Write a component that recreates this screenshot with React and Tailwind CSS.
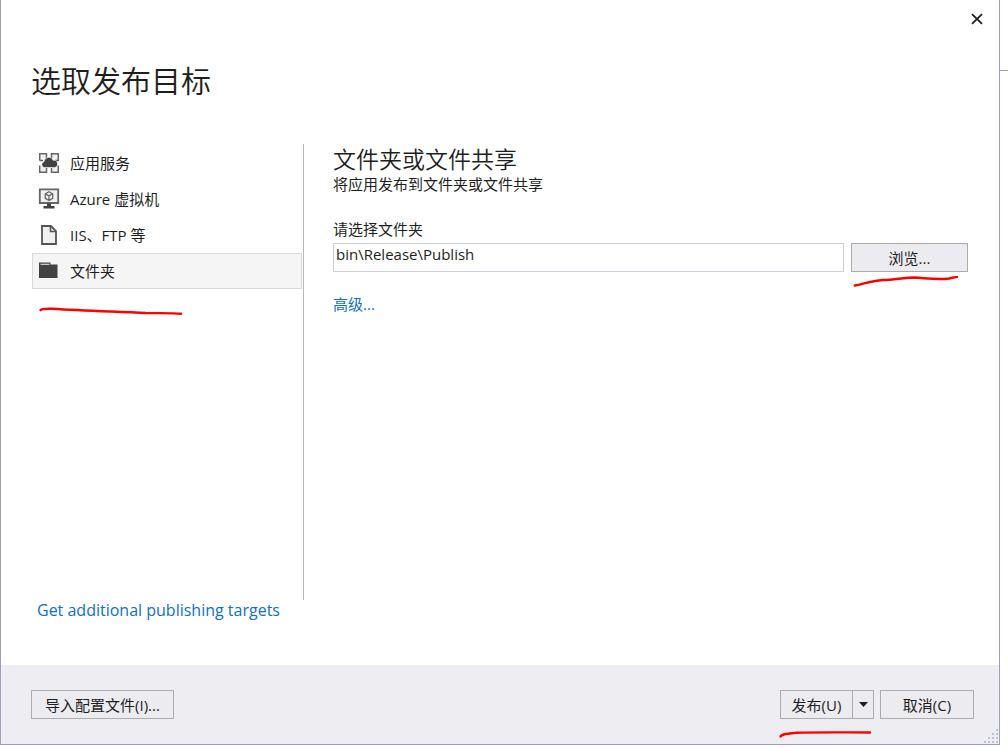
import React, { useState } from 'react';

const AppServiceIcon = () => (
  <svg width="22" height="22" viewBox="0 0 22 22" fill="none" aria-hidden="true">
    <path
      d="M1.7 8.5V1.7H8.5V6M13.5 6V1.7H20.3V8.5H17M1.7 13.5V20.3H8.5V16M13.5 16V20.3H20.3V13.5M1.7 8.5H5"
      fill="#f0eff1"
      stroke="#666"
      strokeWidth="1.5"
    />
    <path
      d="M6.5 15.6a3 3 0 0 1-.5-5.9 4.8 4.8 0 0 1 9.2-1.4 3.7 3.7 0 0 1 1.3 7.3z"
      fill="#424242"
      stroke="#fff"
      strokeWidth="0.6"
    />
  </svg>
);

const VirtualMachineIcon = () => (
  <svg width="22" height="22" viewBox="0 0 22 22" fill="none" aria-hidden="true">
    <path d="M1.800 1.300H20.200V15H1.800z" fill="#f0eff1" stroke="#666" strokeWidth="1.800" />
    <path d="M9 15.500h4v2.500H16.500v2.500H5.500V18h3.500z" fill="#424242" />
    <path
      d="M11 3.800l3.700 2v4.600L11 12.500l-3.700-2.100V5.800zM7.300 5.800L11 7.900l3.700-2.100M11 7.900v4.600"
      stroke="#666"
      strokeWidth="1.300"
    />
  </svg>
);

const DocumentIcon = () => (
  <svg width="22" height="22" viewBox="0 0 22 22" fill="none" aria-hidden="true">
    <path d="M4 2H13L18 7V20H4z" fill="#f0eff1" stroke="#555" strokeWidth="1.800" />
    <path d="M12.500 2V7.500H18" stroke="#555" strokeWidth="1.600" />
  </svg>
);

const FolderIcon = () => (
  <svg width="22" height="22" viewBox="0 0 22 22" fill="none" aria-hidden="true">
    <path d="M1 2.500H12.500V4.500H19.500V18H1z" fill="#424242" />
    <path d="M2.500 3.700H11.500V5H2.500z" fill="#c8c8c8" />
  </svg>
);

const targets = [
  { id: 'app-service', label: '应用服务', icon: AppServiceIcon },
  { id: 'vm', label: 'Azure 虚拟机', icon: VirtualMachineIcon },
  { id: 'iis-ftp', label: 'IIS、FTP 等', icon: DocumentIcon },
  { id: 'folder', label: '文件夹', icon: FolderIcon },
];

// Red pen stroke laid over the dialog
const PenMark = ({ d, className }) => (
  <svg
    width="150"
    height="14"
    viewBox="0 0 150 14"
    fill="none"
    aria-hidden="true"
    className={`pointer-events-none absolute ${className}`}
  >
    <path d={d} stroke="#fe0000" strokeWidth="2.400" strokeLinecap="round" strokeLinejoin="round" />
  </svg>
);

const gripDots = [
  [12, 0],
  [8, 4], [12, 4],
  [4, 8], [8, 8], [12, 8],
  [0, 12], [4, 12], [8, 12], [12, 12],
];

export default function App() {
  const [selected, setSelected] = useState('folder');
  const [folder, setFolder] = useState('bin\\Release\\Publish');

  return (
    <div className="flex min-h-screen bg-white pb-[3px] font-['Open_Sans','Noto_Sans_CJK_SC',sans-serif] text-[15px] leading-5 text-[#1e1e1e]">
      <div className="flex flex-1 flex-col border-x border-b border-[#9b9fb9]">
        <header className="px-[30px]">
          <div className="-mr-5 flex justify-end pt-[7px]">
            <button type="button" aria-label="关闭" className="flex size-6 items-center justify-center">
              <svg width="12" height="12" viewBox="0 0 12 12" aria-hidden="true">
                <path d="M1 1.200L11 10.800M11 1.200L1 10.800" stroke="#1e1e1e" strokeWidth="1.800" />
              </svg>
            </button>
          </div>
          <h1 className="mt-[30px] text-[30px] leading-10 font-[350]">选取发布目标</h1>
        </header>

        <main className="flex flex-1 pt-[43px] pr-[31px] pl-[31px]">
          <aside className="flex w-[272px] shrink-0 flex-col">
            <div className="flex flex-1 flex-col border-r border-[#b4b8c2] pr-px">
              <nav className="relative flex flex-col pt-px">
                {targets.map(({ id, label, icon: Icon }) => (
                  <button
                    key={id}
                    type="button"
                    onClick={() => setSelected(id)}
                    className={`flex h-9 items-center gap-[10px] border px-[5px] text-left ${
                      selected === id ? 'border-[#d9d9d9] bg-[#f5f5f5]' : 'border-transparent'
                    }`}
                  >
                    <Icon />
                    <span>{label}</span>
                  </button>
                ))}
                <PenMark
                  className="top-full left-1 mt-4"
                  d="M4.500 5.200C6 3.500 9 3.500 16 3.800C50 6 80 6.500 110 8C125 8.300 135 8 145 8.800"
                />
              </nav>
            </div>
            <a href="#targets" className="mb-[45px] pl-[5px] text-base leading-5 text-[#0e70c0]">
              Get additional publishing targets
            </a>
          </aside>

          <section className="flex-1 pl-[29px]">
            <h2 className="text-[23px] leading-[30px] font-[350]">文件夹或文件共享</h2>
            <p>将应用发布到文件夹或文件共享</p>
            <label htmlFor="folder" className="mt-[25px] block">
              请选择文件夹
            </label>
            <div className="mt-1 flex gap-[7px]">
              <input
                id="folder"
                type="text"
                value={folder}
                onChange={(e) => setFolder(e.target.value)}
                className="h-[29px] min-w-0 flex-1 border border-[#cccedb] bg-white px-[2px] pb-[7px] outline-none"
              />
              <div className="relative">
                <button type="button" className="h-[29px] w-[117px] border border-[#acacac] bg-[#ececf0]">
                  浏览...
                </button>
                <PenMark
                  className="top-full left-0 mt-1"
                  d="M3.800 9.500C12 8 20 5 32 4C44 4 52 1.500 64 1.500C78 2.500 88 4 98 2.500L106 0.800"
                />
              </div>
            </div>
            <a href="#advanced" className="mt-[22px] inline-block text-[#0e70c0]">
              高级...
            </a>
          </section>
        </main>

        <footer className="relative flex h-[79px] items-center justify-between bg-[#eeeef2] pr-[25px] pl-[30px]">
          <button type="button" className="h-[29px] w-[143px] border border-[#acacac] bg-[#ececf0]">
            导入配置文件(I)...
          </button>
          <div className="flex gap-[6px]">
            <div className="relative flex border border-[#acacac] bg-[#ececf0]">
              <button type="button" className="h-[27px] w-[71px]">
                发布(U)
              </button>
              <button
                type="button"
                aria-label="发布选项"
                className="flex w-[21px] items-center justify-center border-l border-[#acacac]"
              >
                <svg width="9" height="5" viewBox="0 0 9 5" aria-hidden="true">
                  <path d="M0 0H9L4.500 5z" fill="#1e1e1e" />
                </svg>
              </button>
              <PenMark
                className="top-full -left-[5px] mt-[10px]"
                d="M4.500 8.500C6 6 12 5.500 20 4.800C45 4 70 4.500 94 4.500"
              />
            </div>
            <button type="button" className="h-[29px] w-[94px] border border-[#acacac] bg-[#ececf0]">
              取消(C)
            </button>
          </div>

          <svg
            width="14"
            height="14"
            viewBox="0 0 14 14"
            aria-hidden="true"
            className="absolute right-px bottom-px"
          >
            {gripDots.map(([x, y]) => (
              <rect key={`${x}-${y}`} x={x} y={y} width="2" height="2" fill="#bcc3d6" />
            ))}
          </svg>
        </footer>
      </div>

      {/* Edge of the window behind the dialog */}
      <div className="w-2">
        <div className="h-[71px] border-b border-[#a0a0a0]" />
      </div>
    </div>
  );
}
